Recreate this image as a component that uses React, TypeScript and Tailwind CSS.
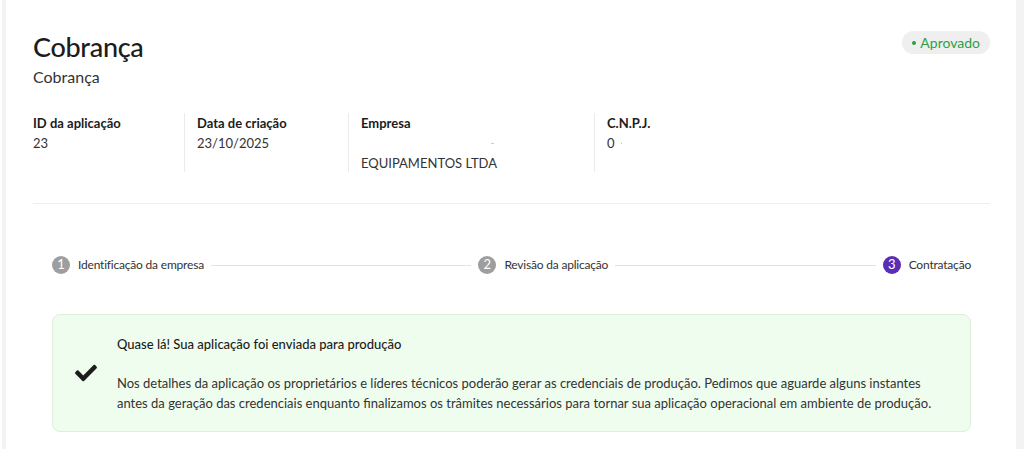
import React from "react";
import { FaCheck } from "react-icons/fa";

const font = { fontFamily: "Lato, 'Noto Sans', sans-serif" };

function Step({ n, label, active }: { n: number; label: string; active?: boolean }) {
  return (
    <div className="flex items-center gap-[8px] shrink-0">
      <div
        className={
          "w-[18px] h-[18px] rounded-full flex items-center justify-center text-[13px] text-white " +
          (active ? "bg-[#5a2db4]" : "bg-[#9e9e9e]")
        }
      >
        {n}
      </div>
      <span className="text-[12px] tracking-[-0.2px] text-[#333]">{label}</span>
    </div>
  );
}

export default function App() {
  return (
    <div className="flex w-[1024px] h-[449px] bg-white overflow-hidden" style={font}>
      <div className="w-[2px] bg-white" />
      <div className="w-[4px] bg-[#f3f3f3]" />
      <div className="flex-1 bg-white pl-[27px] pr-[26px] pt-[31px]">
        <div className="flex justify-between items-start">
          <div>
            <h1 className="text-[27px] leading-[32px] font-medium text-[#1c1c1c] tracking-[-0.3px]">Cobrança</h1>
            <p className="text-[16px] leading-[20px] text-[#333] mt-[4px]">Cobrança</p>
          </div>
          <div className="h-[23px] px-[10px] rounded-full bg-[#efefef] flex items-center gap-[4px] text-[14px] text-[#2ea043]">
            <span className="w-[4px] h-[4px] rounded-full bg-[#2ea043]" />
            Aprovado
          </div>
        </div>

        <div className="flex mt-[26px] text-[13px] leading-[20px]">
          <div className="w-[151px] pr-3">
            <div className="font-bold text-[#1c1c1c]">ID da aplicação</div>
            <div className="text-[#333]">23</div>
          </div>
          <div className="w-[164px] border-l border-[#ebebeb] pl-[12px] h-[59px]">
            <div className="font-bold text-[#1c1c1c]">Data de criação</div>
            <div className="text-[#333]">23/10/2025</div>
          </div>
          <div className="w-[246px] border-l border-[#ebebeb] pl-[12px] h-[59px]">
            <div className="font-bold text-[#1c1c1c]">Empresa</div>
            <div className="flex justify-end pr-[100px] h-[20px] items-center">
              <span className="w-[3px] h-px bg-[#ccc]" />
            </div>
            <div className="text-[#333]">EQUIPAMENTOS LTDA</div>
          </div>
          <div className="border-l border-[#ebebeb] pl-[12px] h-[59px]">
            <div className="font-bold text-[#1c1c1c]">C.N.P.J.</div>
            <div className="text-[#333] flex items-center gap-[6px]">
              0 <span className="w-px h-px bg-[#bbb]" />
            </div>
          </div>
        </div>

        <div className="h-px bg-[#efefef] mt-[31px]" />

        <div className="mx-[19px] mt-[52px] flex items-center gap-[7px]">
          <Step n={1} label="Identificação da empresa" />
          <div className="flex-1 h-px bg-[#e3e3e3]" />
          <Step n={2} label="Revisão da aplicação" />
          <div className="flex-1 h-px bg-[#e3e3e3]" />
          <Step n={3} label="Contratação" active />
        </div>

        <div className="mx-[19px] mt-[40px] h-[118px] rounded-[8px] border border-[#dcefd9] bg-[#effdee] flex items-center">
          <div className="w-[64px] flex justify-center pl-[2px]">
            <FaCheck className="w-[26px] h-[22px] text-[#1c1c1c]" />
          </div>
          <div className="text-[13px]">
            <div className="text-[#1c1c1c] font-medium leading-[20px]">Quase lá! Sua aplicação foi enviada para produção</div>
            <div className="text-[#333] leading-[20px] mt-[19px]">
              Nos detalhes da aplicação os proprietários e líderes técnicos poderão gerar as credenciais de produção. Pedimos que aguarde alguns instantes
              <br />
              antes da geração das credenciais enquanto finalizamos os trâmites necessários para tornar sua aplicação operacional em ambiente de produção.
            </div>
          </div>
        </div>
      </div>
      <div className="w-[8px] bg-[#f3f3f3]" />
    </div>
  );
}
